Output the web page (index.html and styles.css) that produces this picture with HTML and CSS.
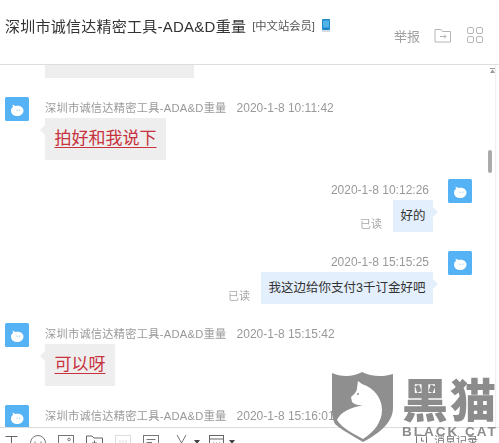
FILE: index.html
```html
<!DOCTYPE html>
<html>
<head>
    <meta charset="UTF-8">
    <link rel="stylesheet" href="styles.css">
</head>
<body>
<svg class="defs" width="0" height="0">
    <symbol id="avatar" viewBox="0 0 24 24">
        <rect width="24" height="24" rx="1.5" fill="#55b2f5"/>
        <path d="M7.5 7.5 L10.5 9 C14 7.8 18.5 9.8 18.5 13.5 C18.5 17 15.5 19 12 19 C8.5 19 6 16.8 6 13.5 C6 11.5 7 10.5 8 10 Z" fill="#fff"/>
        <circle cx="12" cy="13.2" r="0.6" fill="#8cc8f4"/>
        <circle cx="14.6" cy="13.2" r="0.6" fill="#8cc8f4"/>
    </symbol>
</svg>

<div class="header">
    <div class="title">
        <span class="title-name">深圳市诚信达精密工具-ADA&amp;D重量</span>
        <span class="title-tag">[中文站会员]</span>
        <svg class="phone" width="10" height="13" viewBox="0 0 10 13">
            <rect x="1" y="0" width="8" height="11" rx="1" fill="#1f86c9"/>
            <rect x="2" y="1.5" width="6" height="7" fill="#4fb4ea"/>
            <rect x="1" y="11" width="8" height="2" fill="#d5dde3"/>
        </svg>
    </div>
    <div class="header-tools">
        <span>举报</span>
        <svg width="18" height="15" viewBox="0 0 18 15" fill="none" stroke="#b4b4b4">
            <path d="M1 1.5 H7 L8.5 3.5 H16.5 V14 H1 Z"/>
            <path d="M6 8.5 H12 M10 6.5 L12 8.5 L10 10.5"/>
        </svg>
        <svg class="grid-icon" width="16" height="16" viewBox="0 0 16 16" fill="none" stroke="#b4b4b4">
            <rect x="0.5" y="0.5" width="6" height="6" rx="1.5"/>
            <rect x="9.5" y="0.5" width="6" height="6" rx="1.5"/>
            <rect x="0.5" y="9.5" width="6" height="6" rx="1.5"/>
            <rect x="9.5" y="9.5" width="6" height="6" rx="1.5"/>
        </svg>
    </div>
</div>

<div class="chat">
    <div class="messages">
        <div class="old-bubble"></div>

        <div class="msg">
            <svg class="avatar"><use href="#avatar"/></svg>
            <div class="msg-body">
                <div class="msg-head"><span class="name">深圳市诚信达精密工具-ADA&amp;D重量</span><span>2020-1-8 10:11:42</span></div>
                <div class="bubble bubble-in"><span class="hand">拍好和我说下</span></div>
            </div>
        </div>

        <div class="msg msg-me">
            <svg class="avatar"><use href="#avatar"/></svg>
            <div class="msg-body">
                <div class="msg-head">2020-1-8 10:12:26</div>
                <div class="msg-line">
                    <span class="read">已读</span>
                    <div class="bubble bubble-out">好的</div>
                </div>
            </div>
        </div>

        <div class="msg msg-me">
            <svg class="avatar"><use href="#avatar"/></svg>
            <div class="msg-body">
                <div class="msg-head">2020-1-8 15:15:25</div>
                <div class="msg-line">
                    <span class="read">已读</span>
                    <div class="bubble bubble-out">我这边给你支付3千订金好吧</div>
                </div>
            </div>
        </div>

        <div class="msg">
            <svg class="avatar"><use href="#avatar"/></svg>
            <div class="msg-body">
                <div class="msg-head"><span class="name">深圳市诚信达精密工具-ADA&amp;D重量</span><span>2020-1-8 15:15:42</span></div>
                <div class="bubble bubble-in"><span class="hand">可以呀</span></div>
            </div>
        </div>

        <div class="msg">
            <svg class="avatar"><use href="#avatar"/></svg>
            <div class="msg-body">
                <div class="msg-head"><span class="name">深圳市诚信达精密工具-ADA&amp;D重量</span><span>2020-1-8 15:16:01</span></div>
            </div>
        </div>
    </div>
    <div class="scroll">
        <svg class="scroll-top" width="5" height="5" viewBox="0 0 5 5" fill="#9a9a9a">
            <rect width="5" height="1"/>
            <path d="M2.5 1.5 L5 5 H0 Z"/>
        </svg>
        <div class="scroll-thumb"></div>
    </div>
</div>

<div class="toolbar">
    <div class="tools">
        <svg width="13" height="16" viewBox="0 0 13 16" fill="none" stroke="#666"><path d="M0.5 1.5 H12.5 M6.5 1.5 V16"/></svg>
        <svg width="16" height="16" viewBox="0 0 16 16" fill="none" stroke="#777"><circle cx="8" cy="8" r="7.5"/><path d="M5 6.5 V8 M11 6.5 V8"/></svg>
        <svg width="16" height="16" viewBox="0 0 16 16" fill="none" stroke="#777"><rect x="0.5" y="0.5" width="15" height="15"/><circle cx="11" cy="4.5" r="1.3"/></svg>
        <svg width="17" height="16" viewBox="0 0 17 16" fill="none" stroke="#666"><path d="M0.5 15 V1 H6 L8 3 H16.5 V15 M6 8 H11 M8.5 5.5 V10.5"/></svg>
        <svg width="16" height="16" viewBox="0 0 16 16" fill="none" stroke="#ddd"><rect x="0.5" y="0.5" width="15" height="15"/><path d="M5 5 V9 M8 5 V9 M11 5 V9"/></svg>
        <svg width="16" height="16" viewBox="0 0 16 16" fill="none" stroke="#777"><rect x="0.5" y="0.5" width="15" height="15"/><path d="M3.5 4.5 H12.5 M3.5 7.5 H9"/></svg>
        <svg class="tool-cut" width="15" height="16" viewBox="0 0 15 16" fill="none" stroke="#777"><path d="M3 0 L12 16 M12 0 L3 16"/></svg>
        <span class="caret"></span>
        <svg class="tool-box" width="15" height="16" viewBox="0 0 15 16" fill="none" stroke="#666"><rect x="0.5" y="0.5" width="14" height="15"/><path d="M0.5 4 H14.5 M4 8 H5 M7 8 H8 M10 8 H11"/></svg>
        <span class="caret"></span>
    </div>
    <div class="history">
        <svg width="11" height="11" viewBox="0 0 11 11" fill="none" stroke="#777"><rect x="0.5" y="0.5" width="10" height="10" rx="1"/><path d="M5.5 2.5 V6 H8"/></svg>
        <span>消息记录</span>
    </div>
</div>

<div class="watermark">
    <svg width="62" height="71" viewBox="0 0 62 71">
        <path d="M0 1 C9 5 21 5 30 0 C39 5 52 5 61 2 V36 C61 52 44 63 31 70 C17 62 6 55 3 52 C1 48 0 44 0 40 Z" fill="#8f8f8f"/>
        <path d="M26 9 L30 12 C42 16 50 26 50 38 C50 50 42 60 31 67 C22 62 10 56 5 48 C8 40 20 35 32 33 C26 34 22 32 20 30 L19 25 C22 22 25 20 25 16 Z" fill="#fff"/>
        <circle cx="26" cy="22" r="1" fill="#8f8f8f"/>
    </svg>
    <div class="wm-text">
        <div class="wm-cn">黑猫</div>
        <div class="wm-en">BLACK CAT</div>
    </div>
</div>
</body>
</html>
```

FILE: styles.css
```css
* {
    margin: 0;
    padding: 0;
    box-sizing: border-box;
}

html, body {
    height: 443px;
    overflow: hidden;
}

body {
    position: relative;
    display: flex;
    flex-direction: column;
    background-color: #fff;
    font-family: "Liberation Sans", "Noto Sans CJK SC", sans-serif;
    color: #333;
    filter: blur(0.35px);
}

.defs {
    position: absolute;
}

.header {
    height: 65px;
    flex: none;
    display: flex;
    justify-content: space-between;
    padding: 14px 16px 0 5px;
    border-bottom: 1px solid #dedede;
}

.title {
    display: flex;
    align-items: center;
    height: 22px;
    white-space: nowrap;
}

.title-name {
    font-size: 15px;
    letter-spacing: 0.25px;
    color: #333;
}

.title-tag {
    font-size: 11.3px;
    margin-left: 6px;
    color: #555;
}

.phone {
    margin-left: 6px;
}

.header-tools {
    display: flex;
    align-items: center;
    height: 20px;
    margin-top: 11px;
    color: #a0a0a0;
    font-size: 13px;
    gap: 14px;
}

.grid-icon {
    margin-left: 1px;
}

.chat {
    flex: 1;
    min-height: 0;
    display: flex;
    overflow: hidden;
}

.messages {
    flex: 1;
    min-width: 0;
}

.old-bubble {
    width: 149px;
    height: 13px;
    margin: 0 0 19px 45px;
    background-color: #eeeeee;
}

.msg {
    display: flex;
    gap: 16px;
    padding-left: 5px;
    margin-bottom: 19px;
}

.msg-me {
    flex-direction: row-reverse;
    gap: 15px;
    padding-left: 0;
    padding-right: 16px;
}

.avatar {
    width: 24px;
    height: 24px;
    flex: none;
}

.msg-body {
    min-width: 0;
}

.msg-head {
    height: 21px;
    line-height: 22px;
    font-size: 12px;
    color: #999;
    white-space: nowrap;
}

.msg-me .msg-head {
    text-align: right;
    padding-right: 4px;
}

.name {
    font-size: 11.2px;
    letter-spacing: 0.28px;
    margin-right: 10px;
}

.msg-line {
    display: flex;
    justify-content: flex-end;
    align-items: flex-end;
    gap: 11px;
}

.read {
    font-size: 11px;
    line-height: 14px;
    color: #a8a8a8;
    padding-bottom: 1px;
}

.bubble {
    position: relative;
}

.bubble::before {
    content: "";
    position: absolute;
    top: 7px;
    border: 5px solid transparent;
}

.bubble-in {
    display: inline-block;
    height: 42px;
    padding: 0 9.5px;
    line-height: 41px;
    background-color: #eeeeee;
}

.bubble-in::before {
    left: -10px;
    border-right-color: #eeeeee;
}

.bubble-out {
    height: 32px;
    padding: 0 7.5px;
    line-height: 32px;
    font-size: 12.5px;
    color: #333;
    background-color: #e3effc;
    white-space: nowrap;
}

.bubble-out::before {
    right: -10px;
    border-left-color: #e3effc;
}

.hand {
    font-size: 17px;
    color: #c8323c;
    text-decoration: underline;
    text-decoration-skip-ink: none;
    text-underline-offset: 3px;
}

.scroll {
    width: 8px;
    margin-right: 3px;
    border-right: 1px solid #f0f0f0;
    flex: none;
}

.scroll-top {
    display: block;
    margin: 3px 0 0 2px;
}

.scroll-thumb {
    width: 4px;
    height: 23px;
    margin: 77px 0 0 0;
    border-radius: 2px;
    background-color: #aaaaaa;
}

.toolbar {
    height: 16px;
    flex: none;
    display: flex;
    justify-content: space-between;
    border-top: 1px solid #dcdcdc;
    padding: 7px 21px 0 5px;
    overflow: hidden;
}

.tools {
    display: flex;
    align-items: flex-start;
    gap: 12px;
}

.tool-cut {
    margin-left: 3px;
}

.tool-box {
    margin-left: -3px;
}

.caret {
    width: 0;
    height: 0;
    margin: 5px 0 0 -7px;
    border: 3px solid transparent;
    border-top: 4px solid #444;
}

.history {
    display: flex;
    gap: 7px;
    font-size: 11px;
    line-height: 12px;
    color: #777;
}

/* watermark sits on top of the chat */
.watermark {
    position: absolute;
    left: 332px;
    top: 372px;
    display: flex;
    gap: 8px;
}

.wm-text {
    color: #8c8c8c;
}

.wm-cn {
    font-family: "Noto Sans CJK SC", sans-serif;
    font-size: 46px;
    font-weight: 900;
    letter-spacing: 2px;
    line-height: 50px;
    white-space: nowrap;
}

.wm-en {
    font-size: 13.5px;
    font-weight: 700;
    letter-spacing: 2px;
    line-height: 20px;
    white-space: nowrap;
}
```
